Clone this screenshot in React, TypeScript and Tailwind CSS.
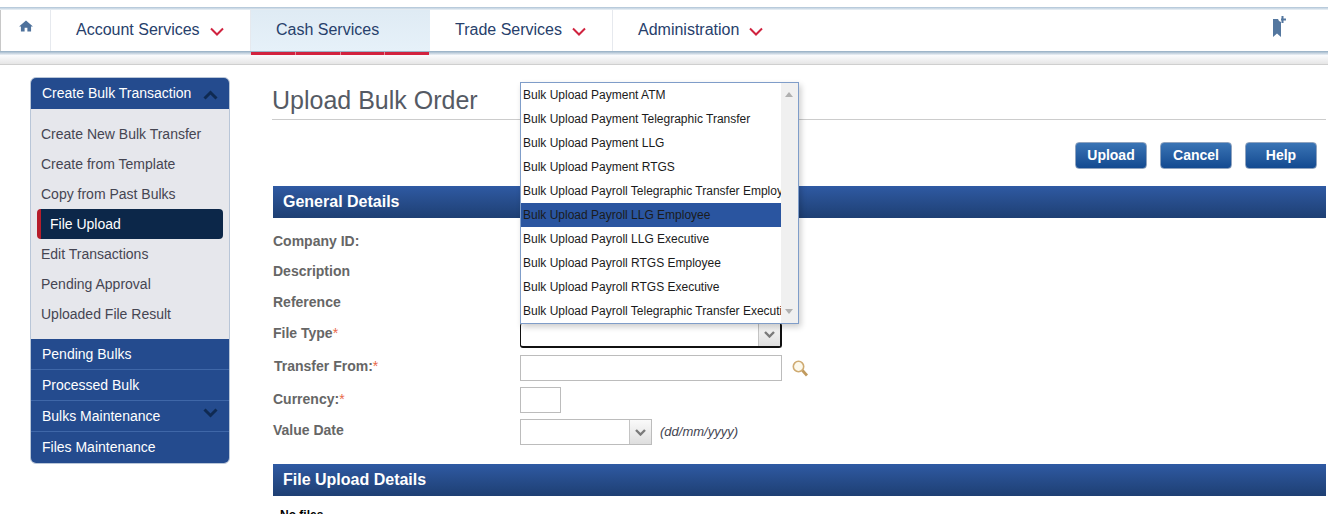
import React from "react";

const options = [
  "Bulk Upload Payment ATM",
  "Bulk Upload Payment Telegraphic Transfer",
  "Bulk Upload Payment LLG",
  "Bulk Upload Payment RTGS",
  "Bulk Upload Payroll Telegraphic Transfer Employee",
  "Bulk Upload Payroll LLG Employee",
  "Bulk Upload Payroll LLG Executive",
  "Bulk Upload Payroll RTGS Employee",
  "Bulk Upload Payroll RTGS Executive",
  "Bulk Upload Payroll Telegraphic Transfer Executive",
];

const subLinks = [
  "Create New Bulk Transfer",
  "Create from Template",
  "Copy from Past Bulks",
  "File Upload",
  "Edit Transactions",
  "Pending Approval",
  "Uploaded File Result",
];

function RedChevron() {
  return (
    <svg width="14" height="9" viewBox="0 0 14 9" className="mt-[4px] ml-[10px]">
      <path d="M1 1.5 L7 7.5 L13 1.5" fill="none" stroke="#d0233f" strokeWidth="2" />
    </svg>
  );
}

function SideChevron({ up }: { up?: boolean }) {
  return (
    <svg
      width="15"
      height="10"
      viewBox="0 0 15 10"
      className={`absolute right-[11px] ${up ? "top-[12px]" : "top-[7px]"}`}
    >
      <path d={up ? "M1.5 8.5 L7.5 2.5 L13.5 8.5" : "M1.5 1.5 L7.5 7.5 L13.5 1.5"} fill="none" stroke="#0f2a52" strokeWidth="3" />
    </svg>
  );
}

function SelectArrow() {
  return (
    <div className="w-[22px] h-full flex items-center justify-center bg-gradient-to-b from-[#fafafa] to-[#dedede] border-l border-[#c4c4c4]">
      <svg width="11" height="7" viewBox="0 0 11 7">
        <path d="M1 1 L5.5 5.5 L10 1" fill="none" stroke="#7a7a7a" strokeWidth="2.4" />
      </svg>
    </div>
  );
}

function NavItem({ label, chevron, width, divider }: { label: string; chevron?: boolean; width: string; divider?: boolean }) {
  return (
    <div className={`${width} h-full pl-[25px] pb-[2px] flex items-center text-[16px] text-[#27406b] ${divider ? "border-r border-[#e6e9ee]" : ""}`}>
      <span>{label}</span>
      {chevron && <RedChevron />}
    </div>
  );
}

function FormRow({ label, star, height, labelTop, children }: { label: string; star?: boolean; height: string; labelTop: string; children?: React.ReactNode }) {
  return (
    <div className={`${height} flex items-start`}>
      <div className={`w-[247px] ${labelTop} text-[14px] leading-[16px] font-bold text-[#666666]`}>
        {label}
        {star && <span className="font-normal text-[#e8694a]">*</span>}
      </div>
      {children}
    </div>
  );
}

function SectionBar({ title }: { title: string }) {
  return (
    <div className="h-[32px] flex items-center pl-[10px] text-[16px] font-bold text-white bg-gradient-to-b from-[#2f5aa3] to-[#1e3f73]">
      {title}
    </div>
  );
}

function ActionButton({ label }: { label: string }) {
  return (
    <div className="w-[72px] h-[27px] flex items-center justify-center rounded-[4px] border border-[#8fa3bf] text-[14px] font-bold text-white bg-gradient-to-b from-[#3a74b5] to-[#134a90]">
      {label}
    </div>
  );
}

export default function App() {
  return (
    <div className="relative w-[1328px] h-[514px] overflow-hidden bg-white font-['Liberation_Sans',Arial,sans-serif]">
      {/* top menu */}
      <div className="pt-[7px]">
        <div className="h-[3px] bg-gradient-to-b from-[#aec3d6] to-[#eef3f7]" />
        <div className="h-[41px] flex border-l border-[#c8c8c8]">
          <div className="w-[50px] h-full flex justify-center pt-[10px] border-r border-[#e6e9ee]">
            <svg width="14" height="12" viewBox="0 0 15 13">
              <path d="M7.5 0.5 L15 7 L13 7 L13 12.5 L9 12.5 L9 8.5 L6 8.5 L6 12.5 L2 12.5 L2 7 L0 7 Z" fill="#4f729c" />
            </svg>
          </div>
          <NavItem label="Account Services" chevron divider width="w-[200px]" />
          <div className="w-[179px] h-full pl-[25px] pb-[2px] flex items-center text-[16px] text-[#27406b] bg-gradient-to-b from-[#dfebf4] to-[#e6f1f9]">
            Cash Services
          </div>
          <NavItem label="Trade Services" chevron divider width="w-[183px]" />
          <NavItem label="Administration" chevron width="w-[200px]" />
          <div className="ml-auto mr-[42px] pt-[6px]">
            <svg width="13" height="22" viewBox="0 0 13 22">
              <path d="M0 3 L5 3 L6 5 L8 6 L8 21 L4 17.5 L0 21 Z" fill="#54779f" />
              <path d="M8 2.5 L8.5 2.5 L8.5 0 L10.5 0 L10.5 2.5 L13 2.5 L13 4.5 L10.5 4.5 L10.5 7 L8.5 7 L8.5 4.5 L8 4.5 Z" fill="#54779f" />
            </svg>
          </div>
        </div>
        <div className="relative h-[14px] bg-gradient-to-b from-[#93adc3] via-[#fafbfd] via-35% to-[#e6e6e6] border-b border-[#cfcfcf]">
          <div className="absolute left-[251px] top-[1px] w-[178px] h-[3px] flex gap-px bg-[#e58a98]">
            <div className="flex-1 bg-[#d2233f]" />
            <div className="flex-1 bg-[#d2233f]" />
            <div className="flex-1 bg-[#d2233f]" />
            <div className="flex-1 bg-[#d2233f]" />
          </div>
        </div>
      </div>

      <div className="flex pt-[12px] pl-[30px]">
        {/* left menu */}
        <div className="w-[200px] h-[387px] rounded-[6px] overflow-hidden border border-[#b9c6d8] bg-[#e6e7ec] flex flex-col">
          <div className="relative h-[31px] shrink-0 pl-[11px] flex items-center text-[14px] text-white bg-[#244b8e]">
            Create Bulk Transaction
            <SideChevron up />
          </div>
          <div className="flex-1 pt-[10px] px-[6px]">
            {subLinks.map((link) =>
              link === "File Upload" ? (
                <div key={link} className="h-[30px] pl-[9px] flex items-center rounded-[4px] border-l-[4px] border-[#b61d2b] bg-[#0c2749] text-[14px] text-white">
                  {link}
                </div>
              ) : (
                <div key={link} className="h-[30px] pl-[4px] flex items-center text-[14px] text-[#454552]">
                  {link}
                </div>
              )
            )}
          </div>
          {["Pending Bulks", "Processed Bulk", "Bulks Maintenance", "Files Maintenance"].map((item) => (
            <div key={item} className="relative h-[31px] shrink-0 pl-[11px] flex items-center text-[14px] text-white bg-[#244b8e] border-b border-[#3f67a8] last:border-b-0">
              {item}
              {item === "Bulks Maintenance" && <SideChevron />}
            </div>
          ))}
        </div>

        {/* main column */}
        <div className="ml-[43px] w-[1053px]">
          <div className="h-[43px] -ml-px border-b border-[#cccccc] text-[25px] leading-[46px] text-[#555a64]">
            Upload Bulk Order
          </div>
          <div className="h-[66px] pt-[22px] pr-[9px] flex justify-end gap-[13px]">
            <ActionButton label="Upload" />
            <ActionButton label="Cancel" />
            <ActionButton label="Help" />
          </div>
          <SectionBar title="General Details" />
          <div className="pt-[8px]">
            <FormRow label="Company ID:" height="h-[30px]" labelTop="mt-[7px]" />
            <FormRow label="Description" height="h-[31px]" labelTop="mt-[7px]" />
            <FormRow label="Reference" height="h-[36px]" labelTop="mt-[7px]" />
            <FormRow label="File Type" star height="h-[32px]" labelTop="mt-[2px]">
              <div className="w-[262px] h-[25px] flex justify-end rounded-[3px] border-2 border-[#111111] border-t-0 border-l">
                <SelectArrow />
              </div>
            </FormRow>
            <FormRow label="Transfer From:" star height="h-[32px]" labelTop="mt-[3px] ml-px -mr-px">
              <div className="w-[262px] h-[26px] border border-[#bcbcbc] bg-white" />
              <svg width="16" height="17" viewBox="0 0 16 17" className="ml-[10px] mt-[5px]">
                <circle cx="6.5" cy="6.5" r="5.2" fill="#fdf9ec" stroke="#cfab72" strokeWidth="1.6" />
                <path d="M10.5 10.5 L15 15.5" stroke="#c09a5e" strokeWidth="2.8" />
              </svg>
            </FormRow>
            <FormRow label="Currency:" star height="h-[32px]" labelTop="mt-[4px]">
              <div className="w-[41px] h-[26px] border border-[#bcbcbc] bg-white" />
            </FormRow>
            <FormRow label="Value Date" height="h-[45px]" labelTop="mt-[3px]">
              <div className="w-[132px] h-[26px] flex justify-end border border-[#bcbcbc] bg-white">
                <SelectArrow />
              </div>
              <span className="ml-[8px] mt-[3px] text-[13px] italic text-[#454552]">(dd/mm/yyyy)</span>
            </FormRow>
          </div>
          <SectionBar title="File Upload Details" />
          <div className="pl-[7px] pt-[10px] text-[12px] font-bold text-black">No files</div>
        </div>
      </div>

      {/* open dropdown list over the form */}
      <div className="absolute left-[520px] top-[82px] w-[279px] h-[242px] flex border border-[#7f9dc9] bg-white shadow-[2px_3px_6px_rgba(0,0,0,0.2)]">
        <div className="w-[260px] overflow-hidden">
          {options.map((opt) => (
            <div
              key={opt}
              className={`h-[24px] pl-[2px] flex items-center whitespace-nowrap text-[12px] text-[#1b1b1b] ${
                opt === "Bulk Upload Payroll LLG Employee" ? "bg-[#2a55a0]" : ""
              }`}
            >
              {opt}
            </div>
          ))}
        </div>
        <div className="flex-1 bg-[#f0f0f0] flex flex-col items-center justify-between py-[9px] pr-px">
          <div className="w-0 h-0 border-x-[4px] border-x-transparent border-b-[5px] border-b-[#b0b0b0]" />
          <div className="w-0 h-0 border-x-[4px] border-x-transparent border-t-[5px] border-t-[#b0b0b0]" />
        </div>
      </div>
    </div>
  );
}
